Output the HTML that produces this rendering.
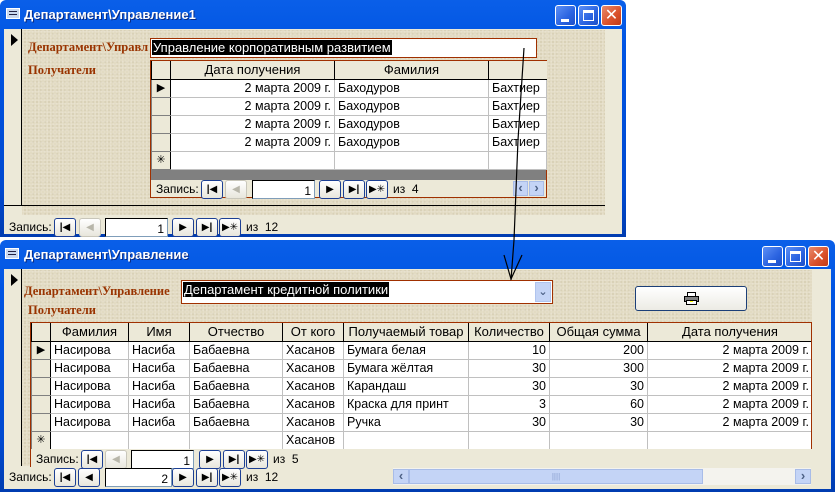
<!DOCTYPE html>
<html><head><meta charset="utf-8"><style>
*{margin:0;padding:0;box-sizing:border-box}
body{width:835px;height:494px;background:#fff;position:relative;overflow:hidden;font-family:"Liberation Sans","DejaVu Sans",sans-serif;font-size:12px;color:#000}
.a{position:absolute}
.tb{background:linear-gradient(#0a5fe8,#0054e3 20%,#0049d0 80%,#003cb0);}
.tt{color:#fff;font-weight:bold;font-size:13px;text-shadow:1px 1px 0 #0a2a80;white-space:nowrap}
.wb{width:21px;height:21px;border:1px solid #fff;border-radius:3px;background:linear-gradient(135deg,#5d8ff5,#2a63e0 60%,#1d4fc8)}
.wb.x{background:linear-gradient(135deg,#e88a6c,#d9502a 60%,#c03a16)}
.tex{background-color:#e2dbc3;background-image:radial-gradient(rgba(255,255,255,.2) 1px,transparent 1px),radial-gradient(rgba(150,130,90,.15) 1px,transparent 1px);background-size:3px 3px,4px 4px;background-position:0 0,1px 2px}
.pl{background:#ece9d8}
.lbl{font-family:"Liberation Serif",serif;font-weight:bold;color:#993300;font-size:12.5px;white-space:nowrap}
.box{background:#fff;border:1px solid #a03000}
.hl{background:#000;color:#fff;font-size:13px;padding:0 1px;white-space:nowrap}
.nb{height:19px;width:22px;border:1px solid #1c3f94;border-radius:3px;background:linear-gradient(#fff,#e8e6dc);text-align:center;font-size:10px;line-height:17px;font-weight:bold}
.nb.d{border-color:#c8c6ba;color:#b8b6aa}
.nt{height:19px;background:#fff;border:1px solid #7f9db9;border-top-color:#000;border-left-color:#000;text-align:right;padding-right:3px;line-height:20px;font-size:12px}
.nl{white-space:nowrap;font-size:12px}
table{border-collapse:collapse;table-layout:fixed;background:#fff}
td{border:1px solid #c0c0c0;height:18px;padding:0 3px;white-space:nowrap;overflow:hidden;font-size:12.5px;line-height:16px}
tr.h td{background:#ece9d8;text-align:center;border:1px solid #000;border-top:none;font-size:13px}
td.s{background:#ece9d8;border-color:#808080;border-right-color:#000;padding:0;text-align:center;font-size:11px}
td.r{text-align:right}
</style></head><body>

<!-- TOP WINDOW -->
<div class="a tb" style="left:0;top:0;width:626px;height:237px;border-radius:6px 6px 0 0"></div>
<div class="a" style="left:6px;top:8px;width:14px;height:11px;border:1px solid #fff;background:#c8d8f0"><div style="margin:2px;height:1px;background:#224;"></div><div style="margin:2px;height:1px;background:#224;"></div></div>
<div class="a tt" style="left:24px;top:7px">Департамент\Управление1</div>
<div class="a wb" style="left:555px;top:5px"><div class="a" style="left:5px;top:13px;width:8px;height:3px;background:#fff"></div></div>
<div class="a wb" style="left:578px;top:5px"><div class="a" style="left:4px;top:4px;width:11px;height:11px;border:1px solid #fff;border-top-width:3px"></div></div>
<div class="a wb x" style="left:601px;top:5px;color:#fff;font-weight:bold;font-size:16px;text-align:center;line-height:19px">✕</div>

<div class="a pl" style="left:4px;top:29px;width:618px;height:205px"></div>
<div class="a tex" style="left:22px;top:30px;width:583px;height:185px"></div>
<div class="a pl" style="left:4px;top:29px;width:18px;height:177px;border-right:1px solid #000"></div>
<div class="a" style="left:11px;top:34px;width:0;height:0;border-left:7px solid #000;border-top:6px solid transparent;border-bottom:6px solid transparent"></div>
<div class="a" style="left:4px;top:205px;width:601px;height:1px;background:#000"></div>

<div class="a lbl" style="left:28px;top:40px">Департамент\Управл</div>
<div class="a box" style="left:150px;top:38px;width:387px;height:20px"><span class="a hl" style="left:1px;top:1px">Управление корпоративным развитием</span></div>
<div class="a lbl" style="left:28px;top:63px">Получатели</div>

<div class="a" style="left:150px;top:60px;width:397px;height:138px;border:1px solid #a03000;background:#ece9d8">
<table style="width:395px">
<colgroup><col style="width:19px"><col style="width:164px"><col style="width:154px"><col style="width:58px"></colgroup>
<tr class="h"><td class="s" style="border-color:#000"></td><td>Дата получения</td><td>Фамилия</td><td style="border-right:none"></td></tr>
<tr><td class="s">▶</td><td class="r">2 марта 2009 г.</td><td>Баходуров</td><td>Бахтиер</td></tr>
<tr><td class="s"></td><td class="r">2 марта 2009 г.</td><td>Баходуров</td><td>Бахтиер</td></tr>
<tr><td class="s"></td><td class="r">2 марта 2009 г.</td><td>Баходуров</td><td>Бахтиер</td></tr>
<tr><td class="s"></td><td class="r">2 марта 2009 г.</td><td>Баходуров</td><td>Бахтиер</td></tr>
<tr><td class="s">✳</td><td></td><td></td><td></td></tr>
</table>
<div style="height:10px;background:#808080"></div>
</div>
<div class="a nl" style="left:156px;top:182px">Запись:</div>
<div class="a nb" style="left:201px;top:180px">|◀</div>
<div class="a nb d" style="left:225px;top:180px">◀</div>
<div class="a nt" style="left:252px;top:180px;width:63px">1</div>
<div class="a nb" style="left:319px;top:180px">▶</div>
<div class="a nb" style="left:343px;top:180px">▶|</div>
<div class="a nb" style="left:366px;top:180px">▶✳</div>
<div class="a nl" style="left:393px;top:182px">из &nbsp;4</div>
<div class="a" style="left:513px;top:181px;width:15px;height:15px;background:#c4d4f6;border:1px solid #a8bce8;color:#4d6185;font-size:13px;font-weight:bold;text-align:center;line-height:12px">‹</div>
<div class="a" style="left:529px;top:181px;width:15px;height:15px;background:#c4d4f6;border:1px solid #a8bce8;color:#4d6185;font-size:13px;font-weight:bold;text-align:center;line-height:12px">›</div>

<div class="a nl" style="left:9px;top:220px">Запись:</div>
<div class="a nb" style="left:54px;top:218px">|◀</div>
<div class="a nb d" style="left:79px;top:218px">◀</div>
<div class="a nt" style="left:105px;top:218px;width:63px">1</div>
<div class="a nb" style="left:172px;top:218px">▶</div>
<div class="a nb" style="left:196px;top:218px">▶|</div>
<div class="a nb" style="left:219px;top:218px">▶✳</div>
<div class="a nl" style="left:246px;top:220px">из &nbsp;12</div>

<!-- BOTTOM WINDOW -->
<div class="a tb" style="left:0;top:240px;width:835px;height:252px;border-radius:6px 6px 0 0"></div>
<div class="a" style="left:5px;top:248px;width:14px;height:11px;border:1px solid #fff;background:#c8d8f0"><div style="margin:2px;height:1px;background:#224;"></div><div style="margin:2px;height:1px;background:#224;"></div></div>
<div class="a tt" style="left:24px;top:247px">Департамент\Управление</div>
<div class="a wb" style="left:762px;top:246px"><div class="a" style="left:5px;top:13px;width:8px;height:3px;background:#fff"></div></div>
<div class="a wb" style="left:785px;top:246px"><div class="a" style="left:4px;top:4px;width:11px;height:11px;border:1px solid #fff;border-top-width:3px"></div></div>
<div class="a wb x" style="left:808px;top:246px;color:#fff;font-weight:bold;font-size:16px;text-align:center;line-height:19px">✕</div>

<div class="a pl" style="left:4px;top:269px;width:827px;height:220px"></div>
<div class="a tex" style="left:22px;top:270px;width:790px;height:53px"></div>
<div class="a tex" style="left:22px;top:323px;width:8px;height:143px"></div>
<div class="a pl" style="left:4px;top:269px;width:18px;height:197px;border-right:1px solid #000"></div>
<div class="a" style="left:11px;top:274px;width:0;height:0;border-left:7px solid #000;border-top:6px solid transparent;border-bottom:6px solid transparent"></div>

<div class="a lbl" style="left:24px;top:284px">Департамент\Управление</div>
<div class="a box" style="left:181px;top:280px;width:372px;height:24px"><span class="a hl" style="left:1px;top:1px">Департамент кредитной политики</span>
<div class="a" style="left:353px;top:1px;width:16px;height:20px;background:#c4d4f6;border:1px solid #b0c4ee;color:#4d6185;font-size:11px;text-align:center;line-height:18px;font-weight:bold">⌄</div></div>
<div class="a" style="left:635px;top:286px;width:112px;height:25px;border:1px solid #1c3f78;border-radius:3px;background:linear-gradient(#fff,#ecebe4)">
<svg class="a" style="left:47px;top:4px" width="17" height="15" viewBox="0 0 17 15"><rect x="4.5" y="1.5" width="8" height="4" fill="#fff" stroke="#000"/><rect x="1.5" y="5.5" width="14" height="5" fill="#808080" stroke="#000"/><rect x="3.5" y="9.5" width="10" height="4" fill="#fff" stroke="#000"/><rect x="7" y="10" width="3" height="1" fill="#ff0"/></svg></div>
<div class="a lbl" style="left:28px;top:303px">Получатели</div>

<div class="a" style="left:30px;top:322px;width:782px;height:145px;border:1px solid #a03000;border-bottom:none;overflow:hidden;background:#ece9d8">
<table style="width:781px">
<colgroup><col style="width:19px"><col style="width:78px"><col style="width:61px"><col style="width:93px"><col style="width:61px"><col style="width:125px"><col style="width:81px"><col style="width:98px"><col style="width:165px"></colgroup>
<tr class="h"><td class="s" style="border-color:#000"></td><td>Фамилия</td><td>Имя</td><td>Отчество</td><td>От кого</td><td>Получаемый товар</td><td>Количество</td><td>Общая сумма</td><td>Дата получения</td></tr>
<tr><td class="s">▶</td><td>Насирова</td><td>Насиба</td><td>Бабаевна</td><td>Хасанов</td><td>Бумага белая</td><td class="r">10</td><td class="r">200</td><td class="r">2 марта 2009 г.</td></tr>
<tr><td class="s"></td><td>Насирова</td><td>Насиба</td><td>Бабаевна</td><td>Хасанов</td><td>Бумага жёлтая</td><td class="r">30</td><td class="r">300</td><td class="r">2 марта 2009 г.</td></tr>
<tr><td class="s"></td><td>Насирова</td><td>Насиба</td><td>Бабаевна</td><td>Хасанов</td><td>Карандаш</td><td class="r">30</td><td class="r">30</td><td class="r">2 марта 2009 г.</td></tr>
<tr><td class="s"></td><td>Насирова</td><td>Насиба</td><td>Бабаевна</td><td>Хасанов</td><td>Краска для принт</td><td class="r">3</td><td class="r">60</td><td class="r">2 марта 2009 г.</td></tr>
<tr><td class="s"></td><td>Насирова</td><td>Насиба</td><td>Бабаевна</td><td>Хасанов</td><td>Ручка</td><td class="r">30</td><td class="r">30</td><td class="r">2 марта 2009 г.</td></tr>
<tr><td class="s">✳</td><td></td><td></td><td></td><td>Хасанов</td><td></td><td></td><td></td><td></td></tr>
</table></div>
<div class="a pl" style="left:31px;top:449px;width:781px;height:18px"></div>
<div class="a nl" style="left:36px;top:452px">Запись:</div>
<div class="a nb" style="left:81px;top:450px">|◀</div>
<div class="a nb d" style="left:105px;top:450px">◀</div>
<div class="a nt" style="left:131px;top:450px;width:63px">1</div>
<div class="a nb" style="left:199px;top:450px">▶</div>
<div class="a nb" style="left:223px;top:450px">▶|</div>
<div class="a nb" style="left:246px;top:450px">▶✳</div>
<div class="a nl" style="left:273px;top:452px">из &nbsp;5</div>

<div class="a nl" style="left:9px;top:470px">Запись:</div>
<div class="a nb" style="left:54px;top:468px">|◀</div>
<div class="a nb" style="left:78px;top:468px">◀</div>
<div class="a nt" style="left:105px;top:468px;width:67px">2</div>
<div class="a nb" style="left:172px;top:468px">▶</div>
<div class="a nb" style="left:196px;top:468px">▶|</div>
<div class="a nb" style="left:219px;top:468px">▶✳</div>
<div class="a nl" style="left:246px;top:470px">из &nbsp;12</div>
<div class="a" style="left:393px;top:468px;width:418px;height:17px;background:#f4f3ee"></div>
<div class="a" style="left:393px;top:469px;width:16px;height:15px;background:#c4d4f6;border:1px solid #a8bce8;color:#4d6185;font-size:13px;font-weight:bold;text-align:center;line-height:12px">‹</div>
<div class="a" style="left:409px;top:469px;width:294px;height:15px;background:#c4d4f6;border:1px solid #a8bce8;color:#8aa0d0;font-size:8px;text-align:center;line-height:13px">||||</div>
<div class="a" style="left:795px;top:469px;width:16px;height:15px;background:#c4d4f6;border:1px solid #a8bce8;color:#4d6185;font-size:13px;font-weight:bold;text-align:center;line-height:12px">›</div>

<!-- arrow line -->
<svg class="a" style="left:0;top:0" width="835" height="494"><polyline points="524,48 518,140 514,240 511,280" fill="none" stroke="#000" stroke-width="1.2"/><polyline points="504,255 511,279 522,255" fill="none" stroke="#000" stroke-width="1.2"/></svg>
</body></html>
